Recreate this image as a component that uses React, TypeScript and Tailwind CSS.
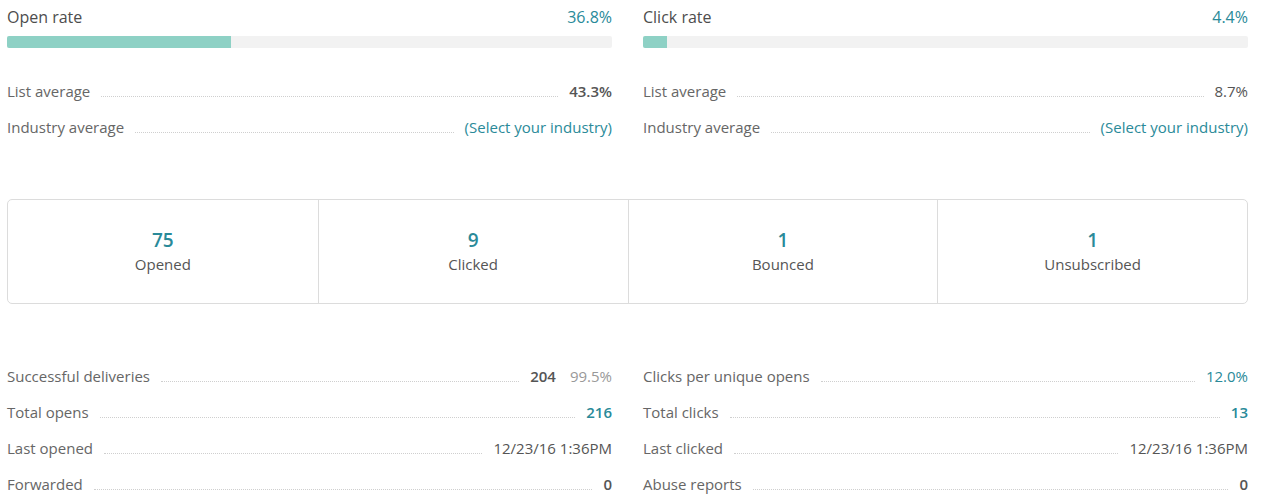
import React from 'react';

const teal = 'text-[#2a8a99]';

interface RowProps {
  label: string;
  children: React.ReactNode;
}

function Row({ label, children }: RowProps) {
  return (
    <div className="flex items-end h-9 pb-[9px]">
      <span className="text-[15px] leading-5 text-[#666] whitespace-nowrap">{label}</span>
      <span className="flex-1 mx-[11px] mb-[4px] border-b border-dotted border-[#cfcfcf]" />
      <span className="text-[15px] leading-5 whitespace-nowrap">{children}</span>
    </div>
  );
}

function RateBlock({ title, value, pct, list, listBold }: { title: string; value: string; pct: number; list: string; listBold: boolean }) {
  return (
    <div>
      <div className="flex items-center justify-between h-[22px]">
        <span className="text-[16px] font-medium text-[#4d4d4d]">{title}</span>
        <span className={`text-[16px] ${teal}`}>{value}</span>
      </div>
      <div className="mt-2 h-3 rounded-[2px] bg-[#f2f2f2] overflow-hidden">
        <div className="h-full bg-[#8ed1c5]" style={{ width: `${pct}%` }} />
      </div>
      <div className="mt-[26px]">
        <Row label="List average">
          <span className={listBold ? 'font-semibold text-[#555]' : 'text-[#555]'}>{list}</span>
        </Row>
        <Row label="Industry average">
          <span className={teal}>(Select your industry)</span>
        </Row>
      </div>
    </div>
  );
}

const stats = [
  { n: '75', label: 'Opened' },
  { n: '9', label: 'Clicked' },
  { n: '1', label: 'Bounced' },
  { n: '1', label: 'Unsubscribed' },
];

export default function App() {
  return (
    <div className="bg-white min-h-[501px] pl-[7px] pr-[13px] pt-[6px] font-['Open_Sans',sans-serif]">
      <div className="grid grid-cols-2 gap-x-[31px]">
        <RateBlock title="Open rate" value="36.8%" pct={37} list="43.3%" listBold />
        <RateBlock title="Click rate" value="4.4%" pct={4} list="8.7%" listBold={false} />
      </div>

      <div className="mt-[53px] grid grid-cols-4 border border-[#dcdcdc] rounded-[5px] h-[105px]">
        {stats.map((s, i) => (
          <div
            key={s.label}
            className={`flex flex-col items-center pt-[28px] ${i > 0 ? 'border-l border-[#dcdcdc]' : ''}`}
          >
            <span className={`text-[19px] leading-6 font-semibold ${teal}`}>{s.n}</span>
            <span className="text-[15px] leading-5 mt-[2px] text-[#555]">{s.label}</span>
          </div>
        ))}
      </div>

      <div className="mt-[55px] grid grid-cols-2 gap-x-[31px]">
        <div>
          <Row label="Successful deliveries">
            <span className="font-semibold text-[#555]">204</span>
            <span className="ml-[14px] text-[#999]">99.5%</span>
          </Row>
          <Row label="Total opens">
            <span className={`font-semibold ${teal}`}>216</span>
          </Row>
          <Row label="Last opened">
            <span className="text-[#555]">12/23/16 1:36PM</span>
          </Row>
          <Row label="Forwarded">
            <span className="font-semibold text-[#555]">0</span>
          </Row>
        </div>
        <div>
          <Row label="Clicks per unique opens">
            <span className={teal}>12.0%</span>
          </Row>
          <Row label="Total clicks">
            <span className={`font-semibold ${teal}`}>13</span>
          </Row>
          <Row label="Last clicked">
            <span className="text-[#555]">12/23/16 1:36PM</span>
          </Row>
          <Row label="Abuse reports">
            <span className="font-semibold text-[#555]">0</span>
          </Row>
        </div>
      </div>
    </div>
  );
}
